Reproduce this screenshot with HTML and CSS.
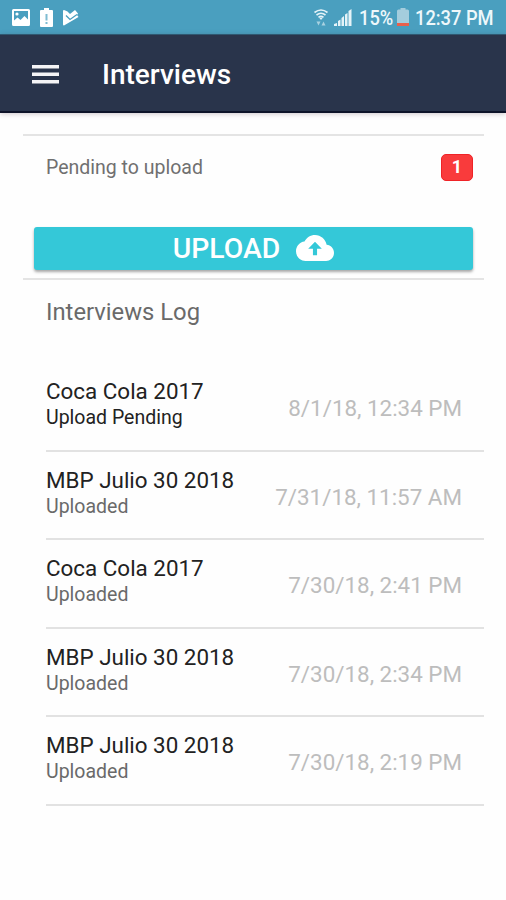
FILE: index.html
```html
<!DOCTYPE html>
<html lang="en">
<head>
    <meta charset="UTF-8">
    <meta name="viewport" content="width=device-width, initial-scale=1.0">
    <title>Interviews</title>
    <link rel="stylesheet" href="styles.css">
</head>
<body>
    <div class="status-bar">
        <div class="status-left">
            <svg width="18" height="17" viewBox="0 0 18 17">
                <path fill="#fff" fill-rule="evenodd" d="M1.500 0h15q1.500 0 1.500 1.500v14q0 1.500-1.500 1.500h-15Q0 17 0 15.500v-14Q0 0 1.500 0zM2 2v9.500l3.500-3 3 2.500 4-4 3.500 3.500V2z"/>
                <circle cx="5" cy="5" r="1.600" fill="#fff"/>
            </svg>
            <svg width="13" height="19" viewBox="0 0 13 19">
                <path fill="#fff" d="M4 0h5v2h3q1 0 1 1v15q0 1-1 1H1q-1 0-1-1V3q0-1 1-1h3z"/>
                <path fill="#7fbcd2" d="M5.500 6h2v6.500h-2zM5.500 14h2v2h-2z"/>
            </svg>
            <svg width="16" height="17" viewBox="0 0 16 17">
                <path fill="#fff" d="M1 1l3.500 1.500L7 5l5-4 3 3.500-1 1.500 1.500 2L1 16.500Q0 16.500 0 15.500V2q0-1 1-1z"/>
                <path fill="none" stroke="#4a9fbf" stroke-width="1.300" d="M3 6.500L7 10.500l7-5"/>
            </svg>
        </div>
        <div class="status-right">
            <svg class="wifi" width="14" height="17" viewBox="0 0 14 17">
                <g fill="none" stroke="#e5f3f8" stroke-width="1.600">
                    <path d="M.5 3.500Q7-1.500 13.500 3.500"/>
                    <path d="M2.500 6Q7 2.500 11.500 6"/>
                    <path d="M4.500 8.300Q7 6.300 9.500 8.300"/>
                </g>
                <path fill="#e5f3f8" d="M5 8.500h4L7 11z"/>
                <path fill="#a9d2e1" d="M2.500 12.500h4l-2 4zM7.500 16.500h4l-2-4z"/>
            </svg>
            <svg class="signal" width="18" height="17" viewBox="0 0 18 17">
                <path fill="#e5f3f8" d="M0 17v-2l3-1v3zM4 17v-5l2.500-1.500V17zM7.500 17V9L10 7v10zM11 17V5.500L13.500 4v13zM14.500 17V2L17.500 0v17z"/>
            </svg>
            <span class="percent"><span>15%</span></span>
            <svg class="battery" width="12" height="18" viewBox="0 0 12 18">
                <path fill="#a4cddd" d="M3.500 0h5v1.500h2Q12 1.500 12 3v15H0V3q0-1.500 1.500-1.500h2z"/>
                <path fill="#e9604c" d="M0 15h12v3H0z"/>
            </svg>
            <span class="clock"><span>12:37 PM</span></span>
        </div>
    </div>

    <div class="header">
        <svg width="27" height="19" viewBox="0 0 27 19">
            <path fill="#f4f4f6" d="M0 0h27v3.500H0zM0 7.500h27V11H0zM0 15h27v3.500H0z"/>
        </svg>
        <h1>Interviews</h1>
    </div>

    <div class="content">
        <div class="pending">
            <span>Pending to upload</span>
            <span class="badge">1</span>
        </div>
        <button class="upload" type="button">
            <span>UPLOAD</span>
            <svg width="38" height="26" viewBox="0 4 24 16" preserveAspectRatio="none">
                <path fill="#fff" d="M19.350 10.040C18.670 6.590 15.640 4 12 4 9.110 4 6.600 5.640 5.350 8.040 2.340 8.360 0 10.910 0 14c0 3.310 2.690 6 6 6h13c2.760 0 5-2.240 5-5 0-2.640-2.050-4.780-4.650-4.960zM13.300 12.500v4h-2.600v-4H7.700L12 8.200l4.300 4.300z"/>
            </svg>
        </button>
        <div class="log">
            <h2>Interviews Log</h2>
            <div class="item">
                <div>
                    <h3>Coca Cola 2017</h3>
                    <p class="not-sent">Upload Pending</p>
                </div>
                <span class="date">8/1/18, 12:34 PM</span>
            </div>
            <div class="item">
                <div>
                    <h3>MBP Julio 30 2018</h3>
                    <p>Uploaded</p>
                </div>
                <span class="date">7/31/18, 11:57 AM</span>
            </div>
            <div class="item">
                <div>
                    <h3>Coca Cola 2017</h3>
                    <p>Uploaded</p>
                </div>
                <span class="date">7/30/18, 2:41 PM</span>
            </div>
            <div class="item">
                <div>
                    <h3>MBP Julio 30 2018</h3>
                    <p>Uploaded</p>
                </div>
                <span class="date">7/30/18, 2:34 PM</span>
            </div>
            <div class="item">
                <div>
                    <h3>MBP Julio 30 2018</h3>
                    <p>Uploaded</p>
                </div>
                <span class="date">7/30/18, 2:19 PM</span>
            </div>
        </div>
    </div>
</body>
</html>
```
FILE: styles.css
```css
* {
    box-sizing: border-box;
}
body {
    margin: 0;
    padding: 0;
    height: 900px;
    overflow: hidden;
    background: #fefefe;
    font-family: Roboto, sans-serif;
    color: #222;
}
h1, h2, h3, p {
    margin: 0;
    font-weight: 400;
}
svg {
    display: block;
    flex: none;
}
.status-bar {
    display: flex;
    justify-content: space-between;
    height: 34px;
    padding: 0 12px;
    background: #4a9fbf;
}
.status-left,
.status-right {
    display: flex;
    align-items: center;
}
.status-left {
    gap: 10px;
}
.status-right {
    color: #eef8fb;
    font-size: 21px;
    line-height: 36px;
}
.signal {
    margin: 0 7px 0 6px;
}
/* narrow status text */
.percent,
.clock {
    display: block;
    white-space: nowrap;
}
.percent span,
.clock span {
    display: block;
    padding-top: 2px;
    font-weight: 500;
    transform: scaleX(0.87);
    transform-origin: left;
}
.percent {
    width: 33px;
    margin-right: 5px;
}
.clock {
    width: 79px;
    margin-left: 6px;
}
.header {
    display: flex;
    align-items: center;
    height: 79px;
    padding: 2px 32px 0;
    background: #29344b;
    border-top: 1px solid #2f5871;
    border-bottom: 2px solid #0d1328;
    box-shadow: 0 1px 5px rgba(60, 30, 50, 0.25);
}
.header h1 {
    margin-left: 43px;
    padding-top: 1px;
    color: #fff;
    font-size: 28px;
    font-weight: 500;
    line-height: 34px;
}
.content {
    padding: 21px 22px 0 23px;
}
.pending {
    display: flex;
    justify-content: space-between;
    height: 93px;
    padding: 18px 11px 0 23px;
    border-top: 2px solid #e4e4e4;
    color: #707070;
    font-size: 19.500px;
    line-height: 27px;
}
.badge {
    width: 32px;
    height: 27px;
    background: #f93b3c;
    border: 1px solid #ef2327;
    border-radius: 5px;
    color: #fff;
    font-size: 18px;
    font-weight: 700;
    line-height: 24px;
    text-align: center;
}
.upload {
    display: flex;
    justify-content: center;
    align-items: center;
    gap: 16px;
    width: 439px;
    height: 43px;
    margin: 0 11px 8px;
    padding: 0;
    border: none;
    border-radius: 3px;
    background: #34c8d8;
    box-shadow: 0 2px 3px rgba(0, 0, 0, 0.35);
    color: #fff;
    font-family: inherit;
    font-size: 28.300px;
    font-weight: 500;
}
.upload svg {
    margin-bottom: 2px;
}
.log {
    padding-left: 23px;
    border-top: 2px solid #e4e4e4;
}
.log h2 {
    height: 83px;
    padding-top: 17px;
    color: #6a6a6a;
    font-size: 23.800px;
    line-height: 30px;
}
.item {
    display: flex;
    justify-content: space-between;
    height: 88.600px;
    padding: 14px 22px 0 0;
    border-bottom: 2px solid #e2e2e2;
}
.item h3 {
    font-size: 22.400px;
    line-height: 28px;
}
.item p {
    color: #6a6a6a;
    font-size: 19.500px;
    line-height: 25px;
}
.item .not-sent {
    color: #222;
}
.date {
    padding-top: 17px;
    color: #bdbdbd;
    font-size: 22.400px;
    line-height: 29px;
}
```
